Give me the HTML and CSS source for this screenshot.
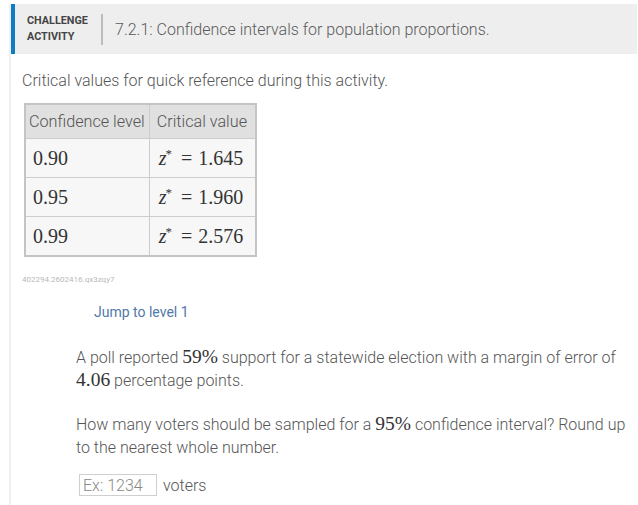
FILE: index.html
```html
<!DOCTYPE html>
<html>
<head>
<meta charset="utf-8">
<link rel="stylesheet" href="styles.css">
</head>
<body>
<div class="page">
  <div class="card">
    <div class="header">
      <div class="label">CHALLENGE<br>ACTIVITY</div>
      <div class="sep"></div>
      <div class="title">7.2.1: Confidence intervals for population proportions.</div>
    </div>
    <div class="content">
      <p class="intro">Critical values for quick reference during this activity.</p>
      <table class="ref">
        <thead>
          <tr><th>Confidence level</th><th>Critical value</th></tr>
        </thead>
        <tbody>
          <tr><td class="m">0.90</td><td class="m"><i>z</i><sup>*</sup><span class="eq">=</span>1.645</td></tr>
          <tr><td class="m">0.95</td><td class="m"><i>z</i><sup>*</sup><span class="eq">=</span>1.960</td></tr>
          <tr><td class="m">0.99</td><td class="m"><i>z</i><sup>*</sup><span class="eq">=</span>2.576</td></tr>
        </tbody>
      </table>
      <div class="code">402294.2602416.qx3zqy7</div>
      <div class="jump">Jump to level 1</div>
      <div class="question">
        <p>A poll reported <span class="mx">59%</span> support for a statewide election with a margin of error of <span class="mx">4.06</span> percentage points.</p>
        <p>How many voters should be sampled for a <span class="mx">95%</span> confidence interval? Round up to the nearest whole number.</p>
        <div class="answer">
          <input class="box" type="text" placeholder="Ex: 1234">
          <span class="unit">voters</span>
        </div>
      </div>
    </div>
  </div>
</div>
</body>
</html>
```

FILE: styles.css
```css
html, body {
  margin: 0;
  padding: 0;
  background: #fff;
}
body {
  font-family: Roboto, "Liberation Sans", sans-serif;
  color: #555;
}
.page {
  padding: 4px 1px 0 9px;
}
.card {
  border-left: 2px solid #f0f0f0;
  min-height: 501px;
}
.header {
  display: flex;
  align-items: center;
  height: 50px;
  background: #eeeeee;
  border-left: 4px solid #0f7cc4;
  box-sizing: border-box;
  padding-left: 12px;
}
.label {
  font-size: 10.8px;
  font-weight: 700;
  line-height: 16px;
  color: #444;
  width: 74px;
}
.sep {
  width: 2px;
  height: 31px;
  background: #bcbcbc;
  margin-right: 12px;
}
.title {
  font-size: 16px;
  font-weight: 300;
  color: #5a5a5a;
}
.content {
  padding-left: 11px;
}
.intro {
  margin: 17px 0 12px;
  font-size: 16px;
  font-weight: 300;
  line-height: 20px;
}
.ref {
  border-collapse: collapse;
  border: 2px solid #c4c4c4;
  margin-left: 2px;
}
.ref th {
  background: #e0e0e0;
  font-weight: 300;
  font-size: 16.2px;
  text-align: left;
  height: 33px;
  padding: 0 4px 0 3px;
  border: 1px solid #cccccc;
  color: #555;
}
.ref th + th {
  padding: 0 8px 0 7px;
}
.ref td {
  background: #f7f7f7;
  border: 1px solid #cccccc;
  height: 38px;
  padding: 0 7px;
}
.ref td + td {
  padding: 0 8px 0 9px;
}
.m {
  font-family: "Liberation Serif", "DejaVu Serif", serif;
  font-size: 20px;
  color: #333;
}
.m i {
  font-style: italic;
}
.m sup {
  font-size: 13px;
  vertical-align: 7px;
  line-height: 0;
  margin-left: -1px;
}
.eq {
  padding: 0 6px 0 9px;
}
.code {
  font-size: 8px;
  color: #b8b8b8;
  margin-top: 18px;
  line-height: 10px;
}
.jump {
  font-size: 14px;
  color: #4f79a8;
  margin: 19px 0 0 72px;
  line-height: 16px;
}
.question {
  margin-left: 54px;
  margin-right: 8px;
}
.question p {
  margin: 26px 0 0;
  font-size: 16px;
  font-weight: 300;
  line-height: 23px;
}
.question p + p {
  margin-top: 21px;
}
.mx {
  font-family: "Liberation Serif", "DejaVu Serif", serif;
  font-size: 19.5px;
  line-height: 1;
  color: #333;
}
.answer {
  display: flex;
  align-items: center;
  margin-top: 15px;
  margin-left: 3px;
}
.box {
  width: 78px;
  height: 22px;
  box-sizing: border-box;
  border: 1px solid #cfcfcf;
  padding: 0 3px;
  font-family: Roboto, "Liberation Sans", sans-serif;
  font-size: 16px;
  font-weight: 300;
  outline: none;
}
.box::placeholder {
  color: #888;
}
.unit {
  margin-left: 6px;
  font-size: 16px;
  font-weight: 300;
}
```
